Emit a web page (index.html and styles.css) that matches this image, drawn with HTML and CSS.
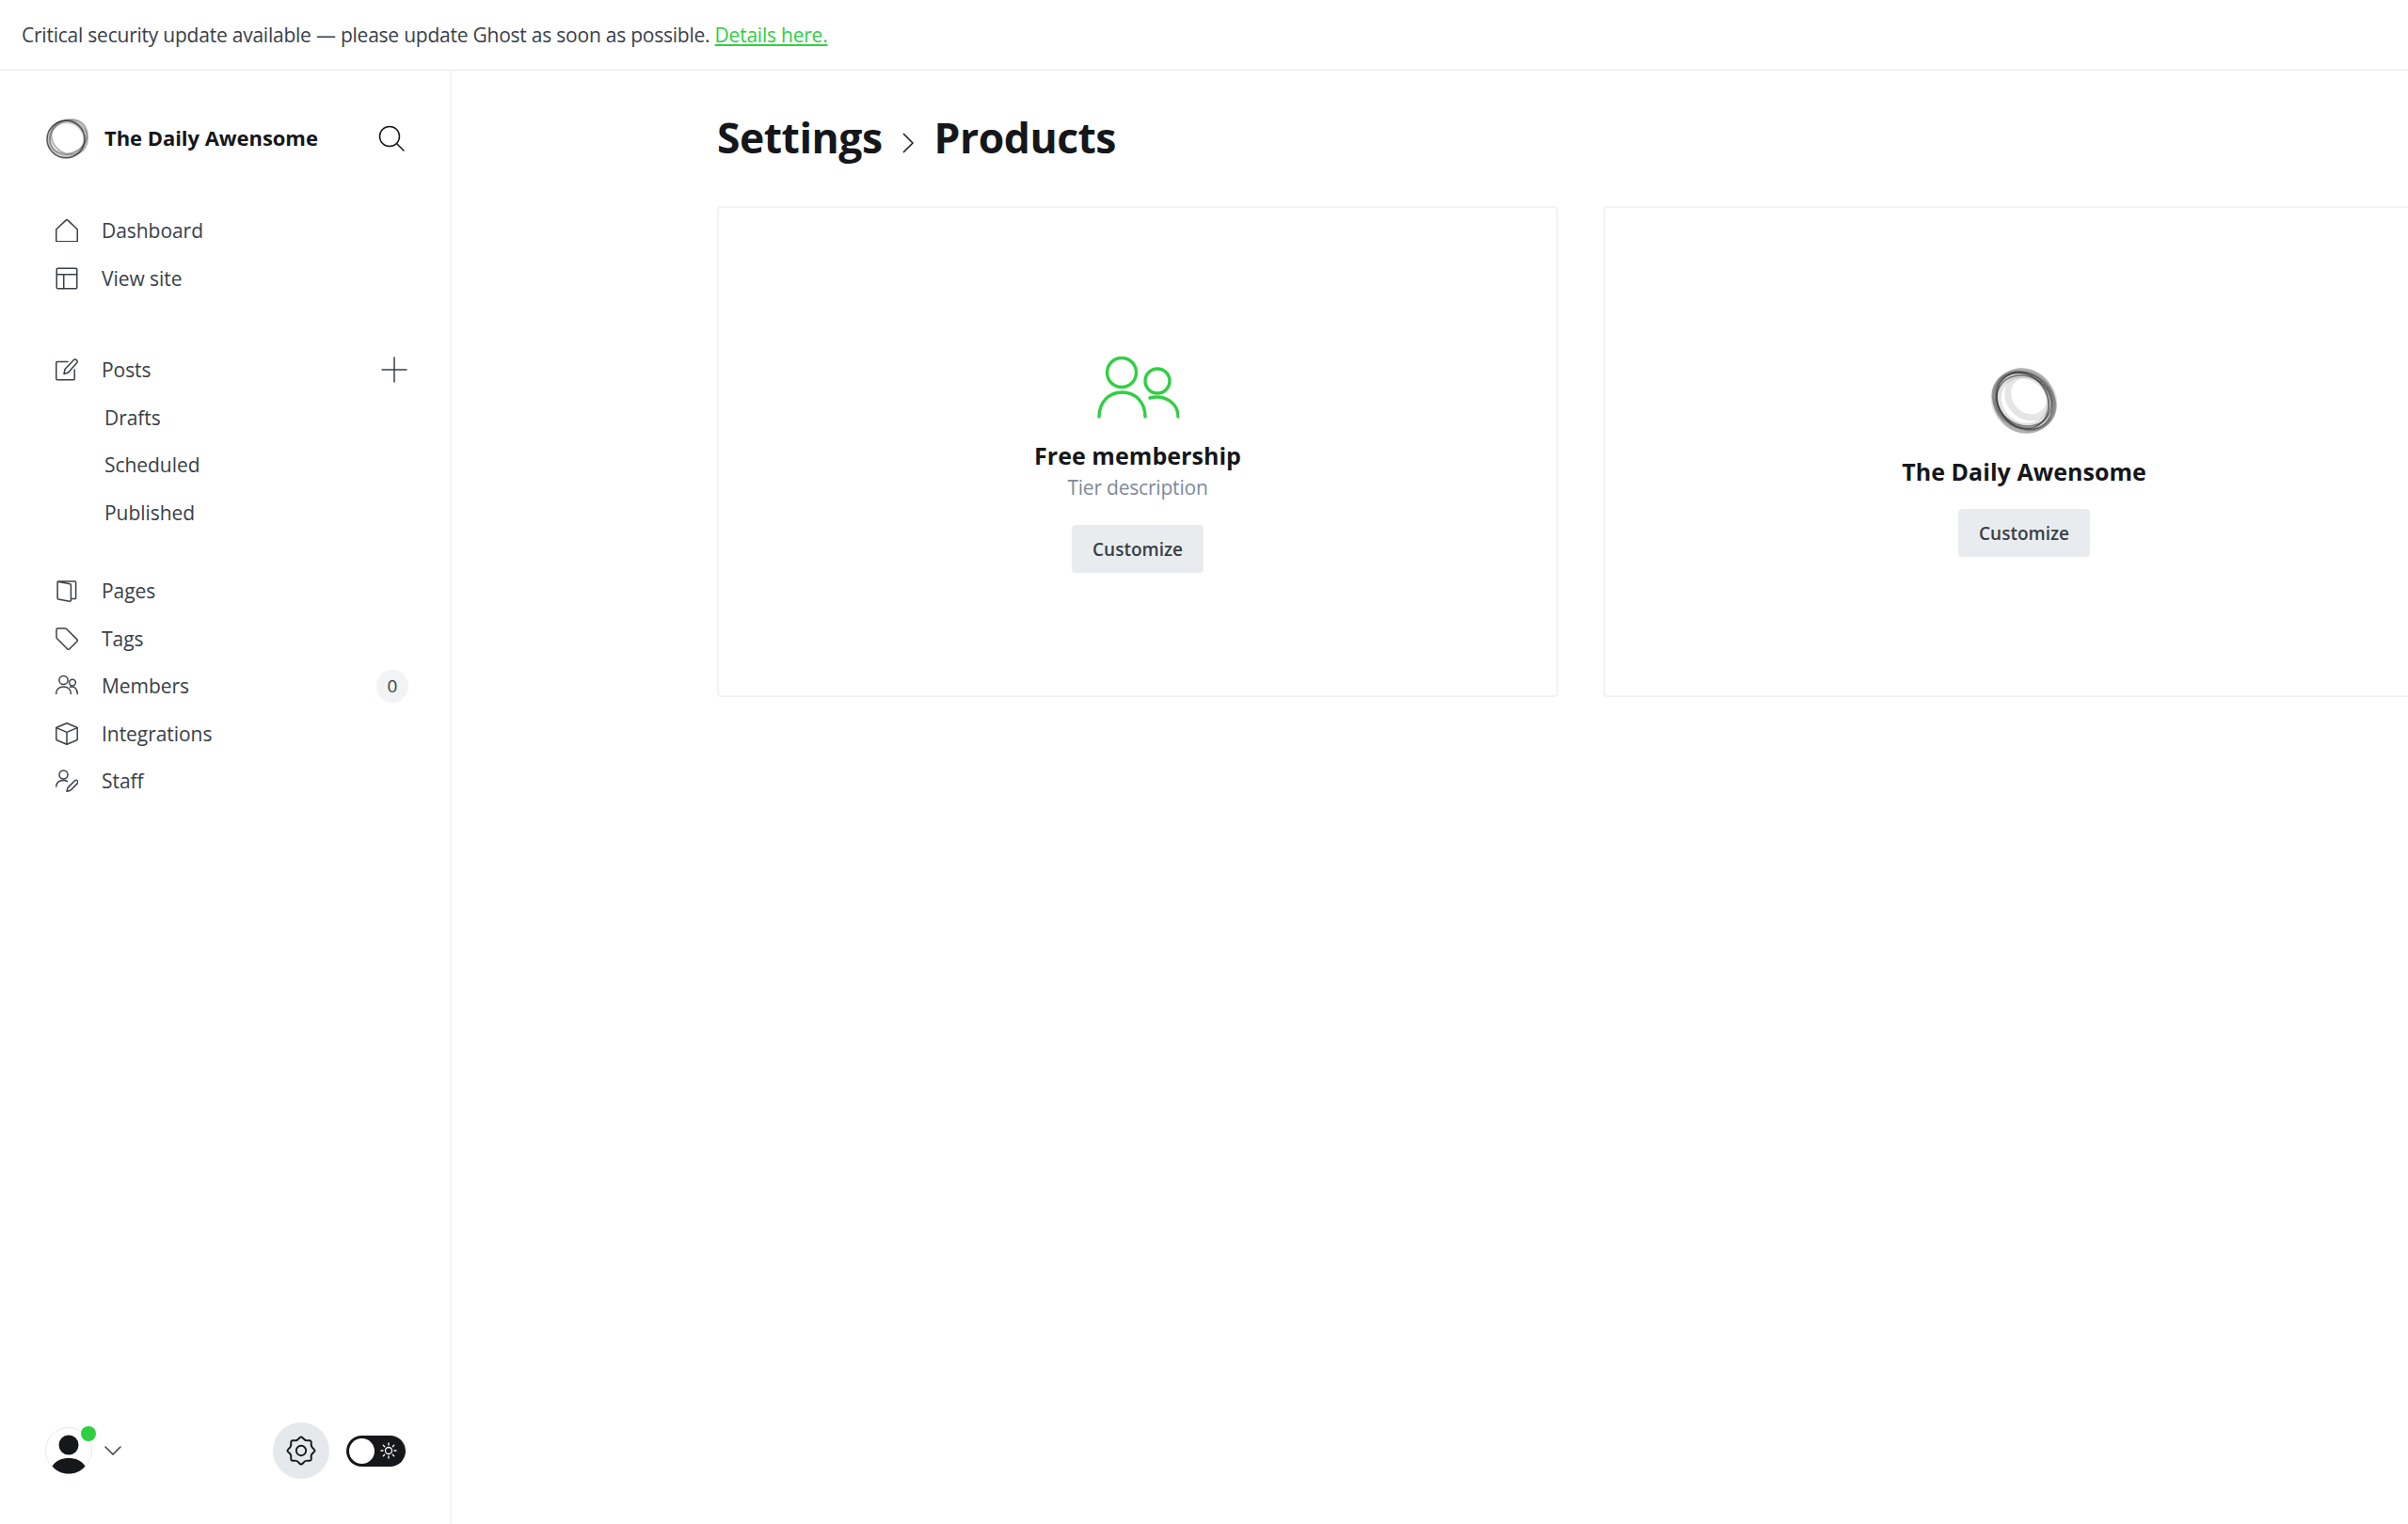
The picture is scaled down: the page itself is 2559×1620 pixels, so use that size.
FILE: index.html
```html
<!DOCTYPE html>
<html lang="en">
<head>
<meta charset="utf-8">
<title>Settings - Products</title>
<link rel="stylesheet" href="styles.css">
</head>
<body>
<div class="banner">Critical security update available — please update Ghost as soon as possible. <a href="#">Details here.</a></div>
<div class="app">
  <aside class="sidebar">
    <div class="brand">
      <svg class="brand-logo" viewBox="0 0 46 46" fill="none">
        <ellipse cx="23" cy="24" rx="19" ry="18.500" stroke="#999" stroke-width="3.400" stroke-opacity=".55"/>
        <ellipse cx="25" cy="21.500" rx="20.500" ry="17.500" stroke="#666" stroke-width="2" stroke-opacity=".6" transform="rotate(-30 25 22)"/>
        <ellipse cx="25.500" cy="21.500" rx="20" ry="17.500" stroke="#777" stroke-width="2" stroke-opacity=".55" transform="rotate(35 25 22)"/>
        <ellipse cx="22" cy="24" rx="20" ry="19.800" stroke="#222" stroke-width="1.500" stroke-opacity=".75"/>
      </svg>
      <span class="brand-name">The Daily Awensome</span>
      <svg class="search" viewBox="0 0 28 28" fill="none" stroke="#15171a" stroke-width="1.5" stroke-linecap="round"><circle cx="12" cy="12" r="10.5"/><path d="M19.5 19.5l7.5 7.5"/></svg>
    </div>
    <nav class="nav">
      <ul class="nav-group">
        <li class="nav-row"><svg class="ico" viewBox="0 0 24 24"><path d="M.75 23.25v-12a1 1 0 0 1 .3-.7L11.3 .9a1 1 0 0 1 1.4 0l10.25 9.65a1 1 0 0 1 .3.7v12a.5.5 0 0 1-.5.5H1.25a.5.5 0 0 1-.5-.5z"/></svg>Dashboard</li>
        <li class="nav-row"><svg class="ico" viewBox="0 0 24 24"><rect x="1.25" y="1.25" width="21.5" height="21.5" rx="1"/><path d="M1.25 7.75h21.5M8.75 7.75v15"/></svg>View site</li>
      </ul>
      <ul class="nav-group posts">
        <li class="nav-row"><svg class="ico" viewBox="0 0 24 24"><path d="M13 3.5H2a1.25 1.25 0 0 0-1.25 1.25V21.5A1.25 1.25 0 0 0 2 22.75h17a1.25 1.25 0 0 0 1.25-1.25V12"/><path d="M9 16.5l1-5L19.5 1.6a1.9 1.9 0 0 1 2.7 0l.4.4a1.9 1.9 0 0 1 0 2.7L13.5 15z"/></svg>Posts<svg class="plus" viewBox="0 0 28 28"><path d="M14 1v26M1 14h26"/></svg></li>
        <li class="nav-row sub">Drafts</li>
        <li class="nav-row sub">Scheduled</li>
        <li class="nav-row sub">Published</li>
      </ul>
      <ul class="nav-group rest">
        <li class="nav-row"><svg class="ico" viewBox="0 0 24 24"><path d="M2.5 2.2l13 2.6a1 1 0 0 1 .9 1v16.4a1 1 0 0 1-1.2 1L3 20.9a1 1 0 0 1-.9-1V3a.9.9 0 0 1 .9-1h17.6a1 1 0 0 1 1 1v16.6a1 1 0 0 1-1 1h-4.2"/></svg>Pages</li>
        <li class="nav-row"><svg class="ico" viewBox="0 0 24 24"><path d="M1 2.2A1.3 1.3 0 0 1 2.2 1h8a2 2 0 0 1 1.4.6l11.4 11.3a1.3 1.3 0 0 1 0 1.8L14.6 23a1.3 1.3 0 0 1-1.8 0L1.6 11.7a2 2 0 0 1-.6-1.4z"/></svg>Tags</li>
        <li class="nav-row"><svg class="ico" viewBox="0 0 24 24"><circle cx="8.5" cy="6" r="4.6"/><path d="M.75 20.5c0-4.8 3.4-7.6 7.75-7.6s7.75 2.8 7.75 7.6"/><circle cx="18" cy="8.6" r="3.4"/><path d="M15.6 13.2c4-1.2 7.65 1.6 7.65 7.3"/></svg>Members<span class="badge">0</span></li>
        <li class="nav-row"><svg class="ico" viewBox="0 0 24 24"><path d="M12 .8l10.7 4.4a.8.8 0 0 1 .5.8v12a.8.8 0 0 1-.5.8L12 23.2 1.3 18.8a.8.8 0 0 1-.5-.8V6a.8.8 0 0 1 .5-.8z"/><path d="M1 5.6L12 10.4l11-4.8M12 10.4v12.8"/></svg>Integrations</li>
        <li class="nav-row"><svg class="ico" viewBox="0 0 24 24"><circle cx="8.5" cy="5.5" r="4.5"/><path d="M.75 18c0-4.2 3.3-6.6 7.4-6.6 1.7 0 3.2.4 4.4 1.2"/><path d="M12 23.2l1-3.8 7.6-7.6a2 2 0 0 1 2.8 2.8l-7.6 7.6z"/></svg>Staff</li>
      </ul>
    </nav>
    <div class="foot">
      <div class="avatar">
        <svg viewBox="0 0 50 50"><circle cx="25" cy="25" r="24.5" fill="#fff" stroke="#e6e9eb"/><circle cx="25" cy="19" r="10.5" fill="#15171a"/><path d="M7.5 41.5C11 35.5 18 33 25 33s14 2.500 17.500 8.500C38 47 32 49.500 25 49.500S12 47 7.500 41.500z" fill="#15171a"/></svg>
        <span class="dot"></span>
      </div>
      <svg class="chev" viewBox="0 0 18 10"><path d="M1 1l8 8 8-8"/></svg>
      <div class="gear">
        <svg viewBox="-16 -16 32 32" fill="none" stroke="#15171a" stroke-width="1.900" stroke-linejoin="round"><circle r="5.200"/><path d="M2.100-13.080Q4.210-10.160 7.760-10.740Q11.310-11.310 10.740-7.760Q10.160-4.210 13.080-2.100Q16 0 13.080 2.100Q10.160 4.210 10.740 7.760Q11.310 11.310 7.760 10.740Q4.210 10.160 2.100 13.080Q0 16-2.100 13.080Q-4.210 10.160-7.760 10.740Q-11.310 11.310-10.740 7.760Q-10.160 4.210-13.080 2.100Q-16 0-13.080-2.100Q-10.160-4.210-10.740-7.760Q-11.310-11.310-7.760-10.740Q-4.210-10.160-2.100-13.080Q0-16 2.100-13.080Z"/></svg>
      </div>
      <div class="toggle">
        <span class="knob"></span>
        <svg viewBox="0 0 18 18" fill="none" stroke="#fff" stroke-width="1.300" stroke-linecap="round"><circle cx="9" cy="9" r="3.500"/><path d="M9 1v2M9 15v2M1 9h2M15 9h2M3.300 3.300l1.400 1.400M13.300 13.300l1.400 1.400M3.300 14.700l1.400-1.400M13.300 4.700l1.400-1.400"/></svg>
      </div>
    </div>
  </aside>
  <main class="main">
    <h1 class="crumbs"><span>Settings</span><svg class="crumb-sep" viewBox="0 0 12 22"><path d="M1 1l10 10-10 10"/></svg><span>Products</span></h1>
    <div class="cards">
      <section class="card card-free">
        <svg class="members-ico" viewBox="0 0 88 66" fill="none" stroke="#30cf43" stroke-width="3.400" stroke-linecap="round"><circle cx="27" cy="17" r="15.500"/><path d="M3 64c0-15 10-26 24.500-26S52 49 52 64"/><circle cx="65" cy="26" r="13"/><path d="M57 44c15-4 30 5 30 20"/></svg>
        <h2 class="card-title">Free membership</h2>
        <p class="card-desc">Tier description</p>
        <button class="btn">Customize</button>
      </section>
      <section class="card card-site">
        <svg class="site-logo" viewBox="0 0 76 72" fill="none">
          <g class="soft">
            <ellipse cx="38" cy="36" rx="31" ry="28" stroke="#999" stroke-width="11" stroke-opacity=".3" transform="rotate(40 38 36)"/>
            <ellipse cx="43" cy="31" rx="24" ry="21" stroke="#aaa" stroke-width="7" stroke-opacity=".3" transform="rotate(50 43 31)"/>
            <ellipse cx="38" cy="36" rx="35" ry="29" stroke="#555" stroke-width="2.500" stroke-opacity=".5" transform="rotate(35 38 36)"/>
            <ellipse cx="38" cy="36" rx="33" ry="28" stroke="#333" stroke-width="2" stroke-opacity=".55" transform="rotate(45 38 36)"/>
            <ellipse cx="37" cy="37" rx="31" ry="26" stroke="#222" stroke-width="1.800" stroke-opacity=".6" transform="rotate(55 38 36)"/>
            <ellipse cx="38" cy="36" rx="30" ry="26" stroke="#222" stroke-width="1.500" stroke-opacity=".55" transform="rotate(30 38 36)"/>
            <ellipse cx="38" cy="36" rx="34" ry="31" stroke="#666" stroke-width="3" stroke-opacity=".4" transform="rotate(60 38 36)"/>
          </g>
        </svg>
        <h2 class="card-title">The Daily Awensome</h2>
        <button class="btn">Customize</button>
      </section>
    </div>
  </main>
</div>
</body>
</html>
```
FILE: styles.css
```css
* { box-sizing: border-box; }
html, body { margin: 0; height: 1620px; overflow: hidden; background: #fff; }
body { font-family: "Open Sans", "Noto Sans", sans-serif; color: #15171a; display: flex; flex-direction: column; }
.banner { height: 75px; flex: none; border-bottom: 1px solid #e6e9eb; padding-left: 23px; line-height: 74px; font-size: 21px; color: #394047; letter-spacing: -.23px; }
.banner a { color: #30cf43; text-decoration: underline; }
.app { flex: 1; display: flex; min-height: 0; }
.sidebar { width: 480px; flex: none; border-right: 2px solid #f1f3f4; display: flex; flex-direction: column; padding: 0 45px 0 48px; }
.brand { display: flex; align-items: center; height: 44px; margin-top: 50px; }
.brand-logo { width: 46px; height: 46px; flex: none; }
.brand-name { margin-left: 17px; padding-bottom: 2px; font-size: 22px; font-weight: 700; letter-spacing: -.05px; flex: 1; }
.search { width: 28px; height: 28px; margin-right: 3px; }
.nav { margin-top: 51px; }
.nav-group { list-style: none; margin: 0; padding: 0; }
.posts { margin-top: 47px; }
.rest { margin-top: 33px; }
.nav-row { height: 50.5px; display: flex; align-items: center; font-size: 21px; color: #394047; letter-spacing: -.05px; padding-left: 11px; }
.ico { width: 24px; height: 24px; margin-right: 25px; flex: none; fill: none; stroke: #394047; stroke-width: 1.5; stroke-linejoin: round; stroke-linecap: round; }
.sub { padding-left: 63px; }
.plus { width: 28px; height: 28px; margin-left: auto; fill: none; stroke: #394047; stroke-width: 1.500; stroke-linecap: round; }
.badge { margin-left: auto; margin-right: -1px; width: 34px; height: 35px; border-radius: 50%; background: #f1f3f4; color: #394047; font-size: 19px; font-weight: 500; display: flex; align-items: center; justify-content: center; letter-spacing: 0; }
.foot { margin-top: auto; margin-bottom: 48px; margin-right: 2px; display: flex; align-items: center; height: 60px; }
.avatar { width: 50px; height: 50px; position: relative; flex: none; }
.avatar svg { display: block; width: 50px; height: 50px; }
.dot { position: absolute; top: -1px; right: -4px; width: 16px; height: 16px; border-radius: 50%; background: #30cf43; }
.chev { width: 18px; height: 10px; margin-left: 13px; fill: none; stroke: #394047; stroke-width: 1.500; stroke-linecap: round; }
.gear { width: 60px; height: 60px; border-radius: 50%; background: #e6e9eb; margin-left: auto; display: flex; align-items: center; justify-content: center; }
.gear svg { width: 32px; height: 32px; }
.toggle { width: 63px; height: 33px; margin-left: 18px; border-radius: 17px; background: #15171a; display: flex; align-items: center; padding: 0 9px 0 3px; justify-content: space-between; }
.knob { width: 27px; height: 27px; border-radius: 50%; background: #fff; }
.toggle svg { width: 18px; height: 18px; }
.main { flex: 1; min-width: 0; overflow: hidden; padding-left: 282px; }
.crumbs { margin: 34px 0 0; height: 72px; display: flex; align-items: center; font-size: 44.5px; font-weight: 700; letter-spacing: -.5px; color: #15171a; }
.crumb-sep { width: 12px; height: 22px; margin: 14px 22px 0 21px; fill: none; stroke: #15171a; stroke-width: 1.500; }
.cards { display: flex; gap: 48px; margin-top: 38px; width: 1836px; }
.card { width: 894px; flex: none; height: 522px; border: 2px solid #f1f3f4; border-radius: 4px; display: flex; flex-direction: column; align-items: center; }
.card-free { padding-top: 158px; }
.card-site { padding-top: 169px; }
.members-ico { width: 88px; height: 66px; }
.site-logo { width: 76px; height: 72px; }
.soft { filter: blur(.4px); }
.card-title { margin: 22px 0 0; font-size: 25px; line-height: 35px; font-weight: 700; letter-spacing: .05px; }
.card-desc { margin: 1px 0 0; font-size: 21px; line-height: 30px; color: #7c8b9a; letter-spacing: -.2px; }
.btn { margin-top: 25px; width: 140px; height: 51px; border: 0; border-radius: 4px; background: #e9ecef; color: #394047; font: 600 19px "Open Sans", sans-serif; padding: 0; }
.card-site .btn { margin-top: 22px; }
```
